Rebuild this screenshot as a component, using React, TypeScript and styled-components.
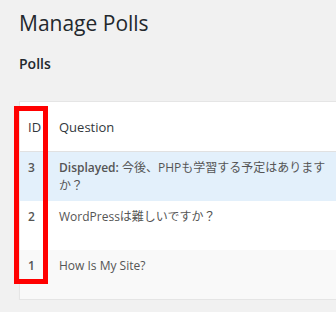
import React from "react";
import styled, { createGlobalStyle } from "styled-components";

const GlobalStyle = createGlobalStyle`
  html, body {
    margin: 0;
    padding: 0;
    background: #f1f1f1;
    overflow: hidden;
  }
  body {
    font-family: "Open Sans", "Noto Sans CJK JP", sans-serif;
    color: #444;
  }
`;

type Poll = { id: number; question: string; displayed?: boolean; tone: "blue" | "white" | "grey" };

const polls: Poll[] = [
  { id: 3, question: "今後、PHPも学習する予定はありますか？", displayed: true, tone: "blue" },
  { id: 2, question: "WordPressは難しいですか？", tone: "white" },
  { id: 1, question: "How Is My Site?", tone: "grey" },
];

const App = () => {
  return (
    <>
      <GlobalStyle />
      <Wrap>
        <Title>Manage Polls</Title>
        <SubTitle>Polls</SubTitle>
        <TableBox>
          <HeadRow>
            <IdCell>ID</IdCell>
            <QuestionCell>Question</QuestionCell>
          </HeadRow>
          {polls.map((p) => (
            <Row key={p.id} tone={p.tone}>
              <IdCell bold>{p.id}</IdCell>
              <QuestionCell>
                {p.displayed && <Strong>Displayed:</Strong>} {p.question}
              </QuestionCell>
            </Row>
          ))}
          <Highlight />
        </TableBox>
      </Wrap>
    </>
  );
};

export default App;

const Wrap = styled.div`
  width: 420px;
  padding: 0 0 0 19px;
`;

const Title = styled.h1`
  margin: 0;
  padding: 9px 0 0 0;
  font-size: 21px;
  font-weight: 400;
  line-height: 29px;
  color: #23282d;
`;

const SubTitle = styled.h2`
  margin: 16px 0 0 0;
  font-size: 14px;
  font-weight: 600;
  line-height: 20px;
  color: #23282d;
`;

const TableBox = styled.div`
  position: relative;
  margin-top: 27px;
  background: #fff;
  border: 1px solid #e5e5e5;
  box-shadow: 0 1px 1px rgba(0, 0, 0, 0.04);
`;

const HeadRow = styled.div`
  display: grid;
  grid-template-columns: 39px 280px;
  align-items: center;
  height: 49px;
  border-bottom: 1px solid #e1e1e1;
  font-size: 13px;
  color: #32373c;
`;

const Row = styled.div<{ tone: "blue" | "white" | "grey" }>`
  display: grid;
  grid-template-columns: 39px 280px;
  align-items: start;
  height: 49px;
  padding-top: 7px;
  box-sizing: border-box;
  font-size: 12px;
  line-height: 18px;
  color: #555;
  background: ${(p) =>
    p.tone === "blue" ? "#e3f0fb" : p.tone === "grey" ? "#f9f9f9" : "#fff"};
  &:last-of-type {
    height: 47px;
  }
`;

const IdCell = styled.div<{ bold?: boolean }>`
  padding-left: 8px;
  font-weight: ${(p) => (p.bold ? 600 : 400)};
`;

const QuestionCell = styled.div`
  padding-right: 4px;
`;

const Strong = styled.strong`
  font-weight: 600;
`;

const Highlight = styled.div`
  position: absolute;
  left: -6px;
  top: 4px;
  width: 24px;
  height: 168px;
  border: 5px solid #ff0000;
`;
